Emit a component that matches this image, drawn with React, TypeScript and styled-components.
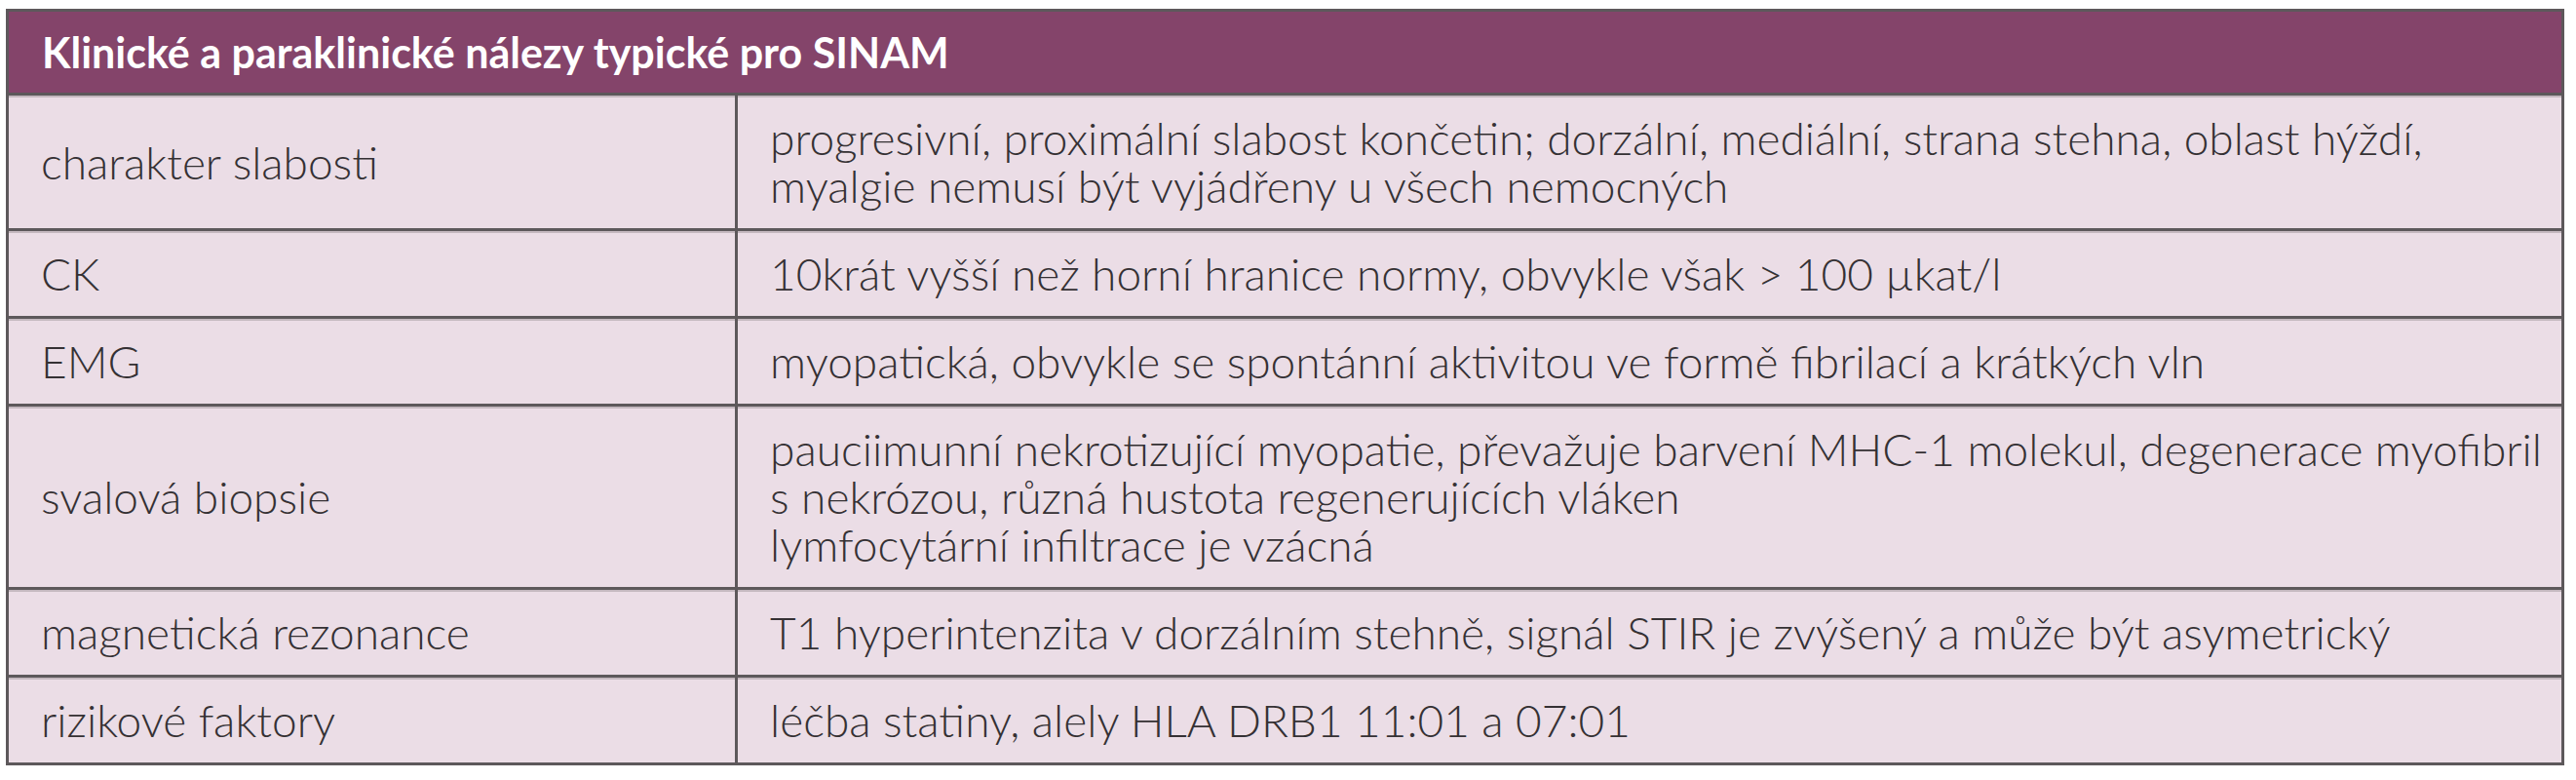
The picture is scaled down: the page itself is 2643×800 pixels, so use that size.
import React from "react";
import styled, { createGlobalStyle } from "styled-components";

const GlobalStyle = createGlobalStyle`
  html, body {
    margin: 0;
    padding: 0;
    background: #ffffff;
  }
  body {
    font-family: "Lato", "Liberation Sans", "Noto Sans", sans-serif;
  }
`;

const Page = styled.div`
  padding: 9px 12px 0 6px;
`;

const Table = styled.table`
  width: 2625px;
  border-collapse: collapse;
  background: #ebdde6;
  border: 3px solid #5d585b;
  box-shadow: 0 2px 0 #b6adb2;
`;

const HeaderCell = styled.th`
  background: #84446a;
  color: #ffffff;
  font-weight: 700;
  font-size: 43px;
  line-height: 46px;
  text-align: left;
  white-space: nowrap;
  padding: 19px 34px 18px 34px;
  border-bottom: 3px solid #5d585b;
`;

const Row = styled.tr`
  border-bottom: 3px solid #5d585b;
  &:last-child {
    border-bottom: none;
  }
`;

const Cell = styled.td<{ $label?: boolean }>`
  color: #353134;
  font-weight: 300;
  font-size: 46px;
  line-height: 49px;
  white-space: nowrap;
  padding: 19px 20px 19px 33px;
  vertical-align: middle;
  width: ${(p) => (p.$label ? "703px" : "auto")};
  border-right: ${(p) => (p.$label ? "3px solid #5d585b" : "none")};
  box-shadow: inset 0 2px 0 #c4b8bf;
`;

const Line = styled.div``;

const rows: { label: string; value: string[] }[] = [
  {
    label: "charakter slabosti",
    value: [
      "progresivní, proximální slabost končetin; dorzální, mediální, strana stehna, oblast hýždí,",
      "myalgie nemusí být vyjádřeny u všech nemocných",
    ],
  },
  { label: "CK", value: ["10krát vyšší než horní hranice normy, obvykle však > 100 µkat/l"] },
  {
    label: "EMG",
    value: ["myopatická, obvykle se spontánní aktivitou ve formě fibrilací a krátkých vln"],
  },
  {
    label: "svalová biopsie",
    value: [
      "pauciimunní nekrotizující myopatie, převažuje barvení MHC-1 molekul, degenerace myofibril",
      "s nekrózou, různá hustota regenerujících vláken",
      "lymfocytární infiltrace je vzácná",
    ],
  },
  {
    label: "magnetická rezonance",
    value: ["T1 hyperintenzita v dorzálním stehně, signál STIR je zvýšený a může být asymetrický"],
  },
  { label: "rizikové faktory", value: ["léčba statiny, alely HLA DRB1 11:01 a 07:01"] },
];

export default function App() {
  return (
    <Page>
      <GlobalStyle />
      <Table>
        <thead>
          <tr>
            <HeaderCell colSpan={2}>Klinické a paraklinické nálezy typické pro SINAM</HeaderCell>
          </tr>
        </thead>
        <tbody>
          {rows.map((r) => (
            <Row key={r.label}>
              <Cell $label>{r.label}</Cell>
              <Cell>
                {r.value.map((v) => (
                  <Line key={v}>{v}</Line>
                ))}
              </Cell>
            </Row>
          ))}
        </tbody>
      </Table>
    </Page>
  );
}
